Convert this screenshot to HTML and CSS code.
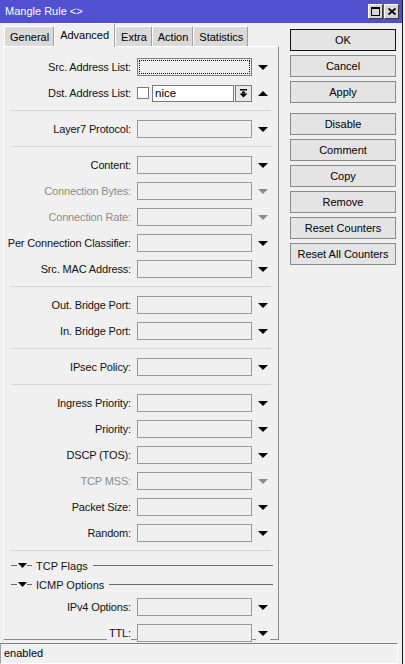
FILE: index.html
```html
<!DOCTYPE html>
<html>
<head>
<meta charset="utf-8">
<link rel="stylesheet" href="styles.css">
</head>
<body>
<div class="window">
  <div class="titlebar">
    <span class="title">Mangle Rule &lt;&gt;</span>
    <div class="tb-buttons">
      <span class="tb-btn"><svg width="9" height="9" viewBox="0 0 9 9"><rect x="0.5" y="0.5" width="8" height="8" fill="none" stroke="#000"/><rect x="0" y="0" width="9" height="2" fill="#000"/></svg></span>
      <span class="tb-btn"><svg width="8" height="7" viewBox="0 0 8 7"><path d="M0.5 0.5L7.5 6.5M7.5 0.5L0.5 6.5" stroke="#000" stroke-width="1.8"/></svg></span>
    </div>
  </div>
  <div class="main">
    <div class="left">
      <div class="tabs">
        <div class="tab">General</div>
        <div class="tab active">Advanced</div>
        <div class="tab">Extra</div>
        <div class="tab">Action</div>
        <div class="tab">Statistics</div>
      </div>
      <div class="panel">
        <div class="row"><div class="lbl"><span>Src. Address List:</span></div><div class="field focus"></div><div class="arr"><svg width="10" height="5" viewBox="0 0 10 5"><path d="M0 0H10L5 5Z"/></svg></div></div>
        <div class="row"><div class="lbl"><span>Dst. Address List:</span></div>
          <div class="dst">
            <span class="chk"></span>
            <span class="input">nice</span>
            <span class="ibtn"><svg width="9" height="9" viewBox="0 0 9 9"><rect x="1" y="0" width="7" height="1.5"/><rect x="3" y="2.5" width="3" height="2"/><path d="M0.5 4.5H8.5L4.5 8.5Z"/></svg></span>
          </div>
          <div class="arr"><svg width="10" height="5" viewBox="0 0 10 5"><path d="M0 5H10L5 0Z"/></svg></div></div>
        <div class="sep"></div>
        <div class="row"><div class="lbl"><span>Layer7 Protocol:</span></div><div class="field"></div><div class="arr"><svg width="10" height="5" viewBox="0 0 10 5"><path d="M0 0H10L5 5Z"/></svg></div></div>
        <div class="sep"></div>
        <div class="row"><div class="lbl"><span>Content:</span></div><div class="field"></div><div class="arr"><svg width="10" height="5" viewBox="0 0 10 5"><path d="M0 0H10L5 5Z"/></svg></div></div>
        <div class="row disabled"><div class="lbl"><span>Connection Bytes:</span></div><div class="field"></div><div class="arr"><svg width="10" height="5" viewBox="0 0 10 5"><path d="M0 0H10L5 5Z"/></svg></div></div>
        <div class="row disabled"><div class="lbl"><span>Connection Rate:</span></div><div class="field"></div><div class="arr"><svg width="10" height="5" viewBox="0 0 10 5"><path d="M0 0H10L5 5Z"/></svg></div></div>
        <div class="row"><div class="lbl"><span>Per Connection Classifier:</span></div><div class="field"></div><div class="arr"><svg width="10" height="5" viewBox="0 0 10 5"><path d="M0 0H10L5 5Z"/></svg></div></div>
        <div class="row"><div class="lbl"><span>Src. MAC Address:</span></div><div class="field"></div><div class="arr"><svg width="10" height="5" viewBox="0 0 10 5"><path d="M0 0H10L5 5Z"/></svg></div></div>
        <div class="sep"></div>
        <div class="row"><div class="lbl"><span>Out. Bridge Port:</span></div><div class="field"></div><div class="arr"><svg width="10" height="5" viewBox="0 0 10 5"><path d="M0 0H10L5 5Z"/></svg></div></div>
        <div class="row"><div class="lbl"><span>In. Bridge Port:</span></div><div class="field"></div><div class="arr"><svg width="10" height="5" viewBox="0 0 10 5"><path d="M0 0H10L5 5Z"/></svg></div></div>
        <div class="sep"></div>
        <div class="row"><div class="lbl"><span>IPsec Policy:</span></div><div class="field"></div><div class="arr"><svg width="10" height="5" viewBox="0 0 10 5"><path d="M0 0H10L5 5Z"/></svg></div></div>
        <div class="sep"></div>
        <div class="row"><div class="lbl"><span>Ingress Priority:</span></div><div class="field"></div><div class="arr"><svg width="10" height="5" viewBox="0 0 10 5"><path d="M0 0H10L5 5Z"/></svg></div></div>
        <div class="row"><div class="lbl"><span>Priority:</span></div><div class="field"></div><div class="arr"><svg width="10" height="5" viewBox="0 0 10 5"><path d="M0 0H10L5 5Z"/></svg></div></div>
        <div class="row"><div class="lbl"><span>DSCP (TOS):</span></div><div class="field"></div><div class="arr"><svg width="10" height="5" viewBox="0 0 10 5"><path d="M0 0H10L5 5Z"/></svg></div></div>
        <div class="row disabled"><div class="lbl"><span>TCP MSS:</span></div><div class="field"></div><div class="arr"><svg width="10" height="5" viewBox="0 0 10 5"><path d="M0 0H10L5 5Z"/></svg></div></div>
        <div class="row"><div class="lbl"><span>Packet Size:</span></div><div class="field"></div><div class="arr"><svg width="10" height="5" viewBox="0 0 10 5"><path d="M0 0H10L5 5Z"/></svg></div></div>
        <div class="row"><div class="lbl"><span>Random:</span></div><div class="field"></div><div class="arr"><svg width="10" height="5" viewBox="0 0 10 5"><path d="M0 0H10L5 5Z"/></svg></div></div>
        <div class="sep"></div>
        <div class="group"><span class="gl-a"></span><svg width="9" height="5" viewBox="0 0 9 5"><path d="M0 0H9L4.5 5Z"/></svg><span class="gl-b"></span><span class="gtext">TCP Flags</span><span class="gl-c"></span></div>
        <div class="group"><span class="gl-a"></span><svg width="9" height="5" viewBox="0 0 9 5"><path d="M0 0H9L4.5 5Z"/></svg><span class="gl-b"></span><span class="gtext">ICMP Options</span><span class="gl-c"></span></div>
        <div class="row"><div class="lbl"><span>IPv4 Options:</span></div><div class="field"></div><div class="arr"><svg width="10" height="5" viewBox="0 0 10 5"><path d="M0 0H10L5 5Z"/></svg></div></div>
        <div class="row"><div class="lbl"><span>TTL:</span></div><div class="field"></div><div class="arr"><svg width="10" height="5" viewBox="0 0 10 5"><path d="M0 0H10L5 5Z"/></svg></div></div>
      </div>
    </div>
    <div class="buttons">
      <div class="btn default">OK</div>
      <div class="btn">Cancel</div>
      <div class="btn">Apply</div>
      <div class="btn gap">Disable</div>
      <div class="btn">Comment</div>
      <div class="btn">Copy</div>
      <div class="btn">Remove</div>
      <div class="btn">Reset Counters</div>
      <div class="btn">Reset All Counters</div>
    </div>
  </div>
  <div class="status">enabled</div>
</div>
</body>
</html>
```

FILE: styles.css
```css
* { box-sizing: border-box; }
html, body {
  margin: 0;
  padding: 0;
  background: #f0f0f0;
}
body {
  font-family: "Liberation Sans", Arial, sans-serif;
  font-size: 11px;
  color: #111;
  width: 405px;
  height: 664px;
  overflow: hidden;
}
.window {
  width: 403px;
  height: 664px;
  border-right: 1px solid #1c1c1c;
  display: flex;
  flex-direction: column;
}
.titlebar {
  height: 24px;
  background: #5050d0;
  display: flex;
  align-items: center;
  justify-content: space-between;
  padding: 0 3px 0 5px;
}
.title {
  color: #fff;
  font-size: 11px;
  padding-bottom: 1px;
}
.tb-buttons {
  display: flex;
  gap: 1px;
}
.tb-btn {
  width: 15px;
  height: 15px;
  background: #d6d6d6;
  border: 1px solid;
  border-color: #fff #3a3a3a #3a3a3a #fff;
  box-shadow: 0 0 0 1px #606060;
  display: flex;
  align-items: center;
  justify-content: center;
}
.main {
  display: flex;
  height: 617px;
}
.left {
  margin-left: 3px;
  width: 276px;
  display: flex;
  flex-direction: column;
}
.tabs {
  height: 23px;
  display: flex;
  align-items: flex-end;
  padding-left: 1px;
  position: relative;
  z-index: 1;
}
.tab {
  height: 20px;
  padding: 0 4px 0 5px;
  line-height: 21px;
  background: #d9d9d9;
  border-left: 1px solid #fff;
  border-top: 1px solid #fff;
  border-right: 1px solid #a0a0a0;
  white-space: nowrap;
  color: #000;
  overflow: hidden;
}
.tab.active {
  height: 24px;
  margin-bottom: -1px;
  padding: 0 5px;
  line-height: 22px;
  background: #f0f0f0;
}
.panel {
  height: 594px;
  border-left: 1px solid #fff;
  border-top: 1px solid #fff;
  border-right: 1px solid #8a8a8a;
  border-bottom: 1px solid #8a8a8a;
  padding-top: 7px;
  display: flex;
  flex-direction: column;
}
.row {
  height: 26px;
  flex: none;
  display: flex;
  align-items: center;
}
.lbl {
  width: 127px;
  align-self: stretch;
  display: flex;
  justify-content: flex-end;
}
.lbl span {
  line-height: 26px;
  background: #f0f0f0;
  padding-left: 2px;
  white-space: nowrap;
  letter-spacing: -0.15px;
}
.disabled .lbl span { color: #8c8c8c; }
.disabled .arr svg { fill: #8c8c8c; }
.field {
  margin-left: 6px;
  width: 115px;
  height: 18px;
  border: 1px solid #9a9a9a;
  background: #f0f0f0;
}
.field.focus {
  border-color: #7a7a7a;
  outline: 1px dotted #000;
  outline-offset: -3px;
}
.arr {
  margin-left: 4px;
  width: 14px;
  align-self: stretch;
  display: flex;
  align-items: center;
  justify-content: center;
  background: #f0f0f0;
}
.arr svg { fill: #000; }
.dst {
  margin-left: 6px;
  width: 115px;
  height: 18px;
  display: flex;
  align-items: center;
}
.chk {
  width: 12px;
  height: 12px;
  background: #fff;
  border: 1px solid #7a7a7a;
}
.input {
  margin-left: 3px;
  width: 82px;
  height: 17px;
  background: #fff;
  border: 1px solid #7a7a7a;
  padding-left: 2px;
  line-height: 15px;
  font-size: 11.5px;
  color: #000;
}
.ibtn {
  margin-left: 1px;
  width: 17px;
  height: 17px;
  border: 1px solid #7a7a7a;
  background: #e8e8e8;
  display: flex;
  align-items: center;
  justify-content: center;
}
.sep {
  flex: none;
  height: 10px;
  padding: 4px 7px 0;
}
.sep::before {
  content: "";
  display: block;
  border-top: 1px solid #d6d6d6;
}
.group {
  flex: none;
  height: 19px;
  display: flex;
  align-items: center;
  padding: 0 5px 0 7px;
}
.group svg { fill: #000; margin: 0 0 0 1px; }
.gl-a, .gl-b, .gl-c {
  height: 1px;
  background: #6a6a6a;
}
.gl-a { width: 6px; }
.gl-b { width: 5px; }
.gtext {
  margin: 0 5px 0 4px;
  white-space: nowrap;
}
.gl-c { flex: 1; }
.buttons {
  margin-left: 11px;
  padding-top: 6px;
  display: flex;
  flex-direction: column;
  gap: 4px;
}
.btn {
  width: 106px;
  height: 22px;
  border: 1px solid #8a8a8a;
  background: #e4e4e4;
  display: flex;
  align-items: center;
  justify-content: center;
  color: #000;
  white-space: nowrap;
}
.btn.default {
  border-color: #111;
}
.btn.gap {
  margin-top: 6px;
}
.status {
  margin-top: 3px;
  height: 21px;
  width: 398px;
  border-top: 1px solid #808080;
  border-left: 1px solid #a0a0a0;
  border-right: 1px solid #fff;
  border-bottom: 1px solid #fff;
  padding-left: 3px;
  line-height: 18px;
  color: #000;
}
```
